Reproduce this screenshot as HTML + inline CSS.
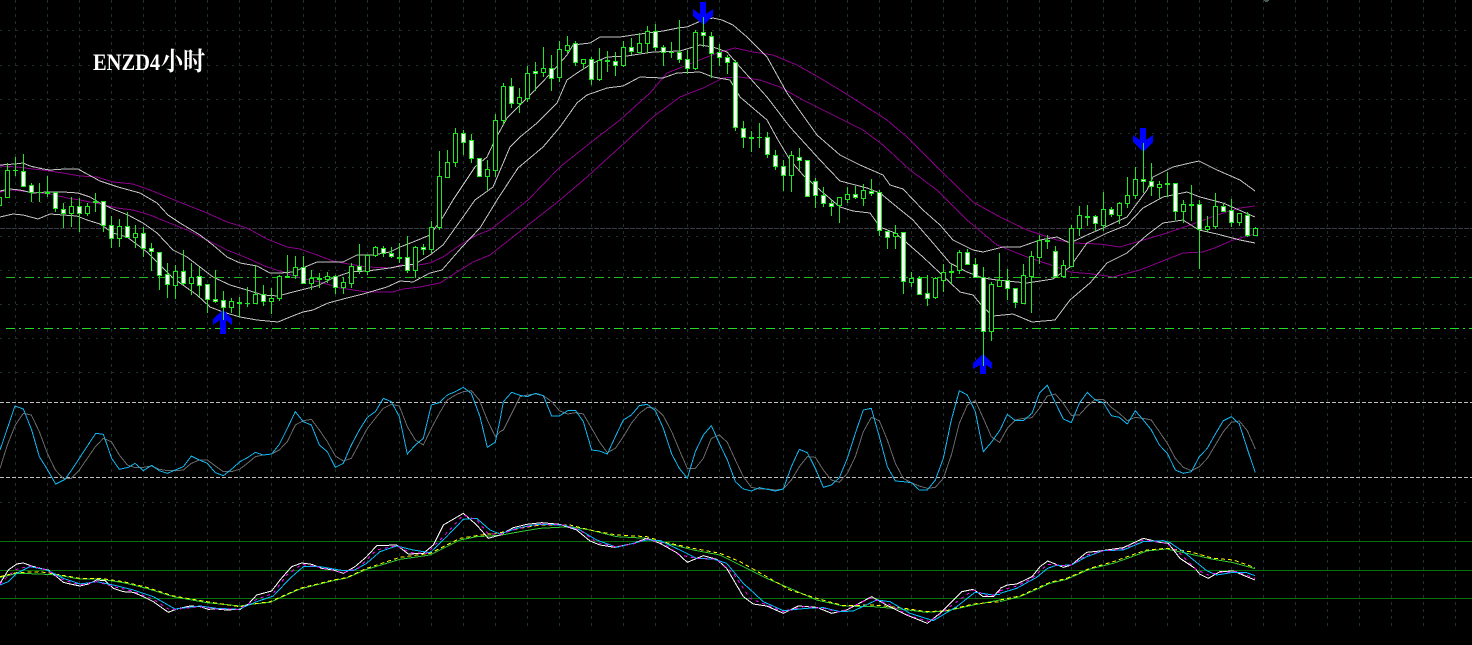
<!DOCTYPE html>
<html lang="zh">
<head>
<meta charset="utf-8">
<title>ENZD4小时</title>
<style>
html,body{margin:0;padding:0;background:#000;width:1472px;height:645px;overflow:hidden}
svg{display:block}
polyline,path{fill:none}
polyline{vector-effect:non-scaling-stroke;stroke-linejoin:miter}
svg *{shape-rendering:crispEdges}
text{shape-rendering:auto}
</style>
</head>
<body>
<svg width="1472" height="645" viewBox="0 0 1472 645" xmlns="http://www.w3.org/2000/svg">
<rect width="1472" height="645" fill="#000"/>

<!-- grid -->
<g stroke="#1d322d" stroke-width="1" stroke-dasharray="3 4">
<path d="M15.5 0V630M47.5 0V630M79.5 0V630M111.5 0V630M143.5 0V630M175.5 0V630M207.5 0V630M239.5 0V630M271.5 0V630M303.5 0V630M335.5 0V630M367.5 0V630M399.5 0V630M431.5 0V630M463.5 0V630M495.5 0V630M527.5 0V630M559.5 0V630M591.5 0V630M623.5 0V630M655.5 0V630M687.5 0V630M719.5 0V630M751.5 0V630M783.5 0V630M815.5 0V630M847.5 0V630M879.5 0V630M911.5 0V630M943.5 0V630M975.5 0V630M1007.5 0V630M1039.5 0V630M1071.5 0V630M1103.5 0V630M1135.5 0V630M1167.5 0V630M1199.5 0V630M1231.5 0V630M1263.5 0V630M1295.5 0V630M1327.5 0V630M1359.5 0V630M1391.5 0V630M1423.5 0V630M1455.5 0V630"/>
</g>
<g stroke="#1d302c" stroke-width="1" stroke-dasharray="2 6">
<path d="M0 30.5H1472M0 65.5H1472M0 99.5H1472M0 133.5H1472M0 167.5H1472M0 202.5H1472M0 236.5H1472M0 270.5H1472M0 304.5H1472M0 338.5H1472M0 372.5H1472M0 502.5H1472"/>
</g>

<!-- price levels -->
<path d="M0 228.5H1472" stroke="#3a3a44" stroke-dasharray="5 1"/>
<path d="M6 277.5H1472" stroke="#20b820" stroke-dasharray="9 4 2 4"/>
<path d="M6 328.5H1472" stroke="#22dd22" stroke-dasharray="9 4 2 4"/>

<!-- bands -->
<g stroke="#8b008b" stroke-width="1">
<polyline points="0,166 17,167 33,169 50,171 63,173 80,176 97,177 113,182 133,184 150,190 167,197 187,205 207,213 227,222 247,228 267,239 287,247 300,249 317,255 333,261 343,263 367,267 393,268 400,265 413,266 430,263 443,257 460,245 477,235 490,230 528,200 560,167 590,143 620,120 650,93 667,73 687,65 707,57 720,52 735,48 753,52 773,55 797,65 820,78 840,90 887,120 907,137 940,170 973,202 1000,217 1027,230 1057,240 1073,243 1100,244 1120,247 1140,241 1167,233 1190,225 1217,215 1240,208 1255,206"/>
<polyline points="0,192 13,190 30,192 50,194 67,198 80,200 100,204 117,208 133,210 150,215 167,222 187,230 207,240 227,250 247,258 267,267 283,272 300,278 320,282 340,288 367,292 393,292 403,289 420,287 440,283 457,272 473,262 490,255 560,200 587,177 620,147 653,117 680,97 703,88 723,78 740,77 760,80 780,87 803,100 843,120 863,130 883,145 910,170 937,190 967,220 997,245 1027,257 1057,267 1070,272 1093,274 1113,277 1140,270 1160,262 1183,253 1203,252 1217,247 1233,240 1255,234"/>
</g>
<g stroke="#c4c4c4" stroke-width="1">
<polyline points="0,165 15,164 23,163 30,166 43,169 50,170 65,169 78,169 87,174 100,181 118,187 140,193 157,203 168,215 180,223 200,235 213,245 227,257 240,263 257,266 270,273 280,273 293,272 317,262 333,262 343,262 357,255 373,255 390,252 400,247 413,242 430,235 443,217 453,200 463,185 475,167 487,157 495,140 507,118 530,95 552,72 567,55 573,45 590,43 600,37 620,37 640,34 663,31 678,28 687,27 703,20 713,18 722,20 733,25 747,37 767,57 787,93 817,135 840,155 860,165 883,175 890,185 903,189 923,210 940,225 953,240 973,250 983,252 1003,247 1020,247 1040,240 1057,237 1070,243 1087,235 1103,228 1127,217 1147,190 1153,177 1173,167 1190,163 1199,161 1217,170 1240,180 1255,191"/>
<polyline points="0,191 10,189 20,190 33,193 47,192 63,192 78,193 90,197 100,203 113,209 128,215 143,223 157,233 173,250 187,257 200,267 213,277 230,285 247,290 263,295 278,296 293,292 317,286 333,278 350,272 367,271 390,268 400,266 415,264 430,255 443,245 463,217 475,200 493,187 510,147 520,137 537,123 557,103 567,80 577,73 593,63 607,57 627,56 653,52 680,51 700,45 713,47 727,52 740,67 767,97 790,127 820,160 840,181 867,188 880,193 897,207 913,220 933,243 950,263 967,272 983,278 997,280 1027,283 1053,279 1070,267 1087,243 1107,233 1127,225 1143,208 1163,197 1187,192 1200,197 1223,203 1255,217"/>
<polyline points="0,217 13,214 23,215 38,219 50,214 63,215 77,216 87,220 100,224 113,233 127,237 147,252 157,262 173,278 197,295 210,307 223,312 240,317 257,320 278,322 290,317 303,312 313,310 328,303 347,298 363,294 387,287 400,281 413,282 430,273 442,270 462,247 480,228 497,200 518,168 543,147 560,127 577,103 587,95 607,88 623,86 640,77 663,78 677,73 700,72 713,77 730,80 740,97 767,120 778,140 790,160 803,175 820,190 840,207 853,211 870,213 880,227 895,233 907,243 923,257 940,273 960,292 973,295 983,307 993,316 1013,314 1032,322 1055,320 1070,300 1090,283 1107,263 1127,253 1147,235 1163,223 1183,220 1199,230 1217,234 1240,240 1255,243"/>
</g>

<!-- arrows -->
<g fill="#0000ff" stroke="none">
<path style="fill:#0000ff" d="M223 310L232 319V325L226 320V334H220V320L213 325V319Z"/>
<path style="fill:#0000ff" d="M983 354L992 363V369L986 365V374H980V365L973 369V363Z"/>
<path style="fill:#0000ff" d="M700 2H706V14L713 9V16L703.500 25L693 16V9L700 14Z"/>
<path style="fill:#0000ff" d="M1140 128H1146V140L1153 135V142L1143.500 152L1133 142V135L1140 140Z"/>
</g>

<!-- wicks -->
<path stroke="#1ee81e" stroke-width="1" d="M-.5 190V210M7.500 163V198M15.500 157V176M23.500 154V186M31.500 183V202M39.500 183V202M47.500 176V197M55.500 192V212M63.500 203V228M71.500 197V227M79.500 198V232M87.500 203V216M95.500 193V212M103.500 201V232M111.500 216V248M119.500 219V247M127.500 212V238M135.500 225V248M143.500 227V257M151.500 243V271M159.500 252V290M167.500 263V298M175.500 265V299M183.500 250V285M191.500 263V295M199.500 267V297M207.500 284V313M215.500 270V303M223.500 291V320M231.500 298V313M239.500 297V317M247.500 287V307M255.500 265V303M263.500 285V306M271.500 288V314M279.500 275V301M287.500 255V277M295.500 256V279M303.500 256V284M311.500 270V290M319.500 273V288M327.500 272V283M335.500 275V294M343.500 277V294M351.500 263V288M359.500 244V274M367.500 255V275M375.500 246V257M383.500 246V257M391.500 247V258M399.500 243V263M407.500 236V273M415.500 246V278M423.500 244V255M431.500 221V253M439.500 151V230M447.500 150V178M455.500 128V167M463.500 130V155M471.500 134V163M479.500 158V177M487.500 160V190M495.500 114V177M503.500 83V125M511.500 78V108M519.500 88V113M527.500 66V102M535.500 62V91M543.500 47V77M551.500 55V91M559.500 41V82M567.500 36V53M575.500 41V66M583.500 59V69M591.500 57V85M599.500 48V81M607.500 51V72M615.500 52V76M623.500 41V67M631.500 38V55M639.500 33V53M647.500 26V53M655.500 24V51M663.500 45V66M671.500 42V58M679.500 20V63M687.500 50V74M695.500 30V70M703.500 17V47M711.500 32V78M719.500 44V66M727.500 55V74M735.500 60V131M743.500 121V148M751.500 131V152M759.500 123V148M767.500 132V158M775.500 150V170M783.500 160V191M791.500 151V192M799.500 148V170M807.500 160V197M815.500 178V208M823.500 187V207M831.500 199V216M839.500 197V223M847.500 187V203M855.500 186V199M863.500 184V206M871.500 179V196M879.500 190V236M887.500 231V249M895.500 225V249M903.500 232V294M911.500 272V287M919.500 276V295M927.500 275V306M935.500 277V299M943.500 264V292M951.500 264V284M959.500 250V274M967.500 249V265M975.500 258V277M983.500 267V366M991.500 282V341M999.500 253V287M1007.500 269V300M1015.500 288V308M1023.500 264V303M1031.500 251V313M1039.500 235V264M1047.500 235V249M1055.500 246V276M1063.500 260V278M1071.500 225V267M1079.500 206V236M1087.500 205V226M1095.500 215V231M1103.500 192V231M1111.500 207V217M1119.500 202V224M1127.500 177V208M1135.500 167V199M1143.500 143V193M1151.500 163V196M1159.500 181V198M1167.500 172V197M1175.500 183V220M1183.500 200V223M1191.500 185V221M1199.500 200V269M1207.500 216V232M1215.500 193V229M1223.500 204V212M1231.500 199V227M1239.500 213V226M1247.500 212V237M1255.500 227V236"/>

<!-- doji -->
<path stroke="#1ee81e" stroke-width="1" d="M13 170.500h5M37 192.500h5M45 192.500h5M45 193.500h5M93 201.500h5M93 202.500h5M237 302.500h5M237 303.500h5M245 303.500h5M285 276.500h5M285 277.500h5M317 278.500h5M317 279.500h5M397 257.500h5M397 258.500h5M605 60.500h5M605 61.500h5M669 52.500h5M749 137.500h5M749 138.500h5M757 137.500h5M949 271.500h5M949 272.500h5M1045 240.500h5M1045 241.500h5M1085 216.500h5M1085 217.500h5M1165 183.500h5M1165 184.500h5M1189 204.500h5M1189 205.500h5"/>

<!-- hollow bodies -->
<path stroke="#1ee81e" stroke-width="1" style="fill:#000" d="M-2.500 197.500h4v8h-4zM5.500 170.500h4v27h-4zM69.500 206.500h4v7h-4zM85.500 206.500h4v7h-4zM117.500 226.500h4v12h-4zM133.500 233.500h4v4h-4zM173.500 271.500h4v14h-4zM189.500 277.500h4v6h-4zM229.500 301.500h4v6h-4zM253.500 294.500h4v9h-4zM269.500 298.500h4v3h-4zM277.500 276.500h4v22h-4zM293.500 267.500h4v8h-4zM309.500 278.500h4v5h-4zM325.500 276.500h4v3h-4zM341.500 282.500h4v5h-4zM349.500 266.500h4v17h-4zM365.500 255.500h4v16h-4zM373.500 247.500h4v8h-4zM413.500 247.500h4v23h-4zM429.500 227.500h4v22h-4zM437.500 176.500h4v51h-4zM445.500 162.500h4v15h-4zM453.500 133.500h4v29h-4zM485.500 169.500h4v7h-4zM493.500 120.500h4v50h-4zM501.500 86.500h4v34h-4zM517.500 97.500h4v6h-4zM525.500 73.500h4v25h-4zM541.500 68.500h4v4h-4zM557.500 49.500h4v28h-4zM565.500 45.500h4v5h-4zM581.500 59.500h4v4h-4zM597.500 60.500h4v19h-4zM621.500 47.500h4v18h-4zM637.500 43.500h4v9h-4zM645.500 31.500h4v12h-4zM693.500 32.500h4v36h-4zM789.500 155.500h4v20h-4zM837.500 197.500h4v8h-4zM845.500 194.500h4v5h-4zM861.500 190.500h4v8h-4zM893.500 233.500h4v3h-4zM909.500 278.500h4v4h-4zM933.500 278.500h4v19h-4zM941.500 272.500h4v8h-4zM957.500 252.500h4v18h-4zM989.500 284.500h4v47h-4zM997.500 280.500h4v6h-4zM1021.500 275.500h4v28h-4zM1029.500 256.500h4v20h-4zM1037.500 240.500h4v17h-4zM1061.500 265.500h4v11h-4zM1069.500 228.500h4v38h-4zM1077.500 215.500h4v13h-4zM1101.500 209.500h4v16h-4zM1117.500 203.500h4v12h-4zM1125.500 195.500h4v8h-4zM1133.500 179.500h4v16h-4zM1157.500 184.500h4v3h-4zM1181.500 204.500h4v7h-4zM1205.500 226.500h4v3h-4zM1213.500 206.500h4v20h-4zM1237.500 213.500h4v9h-4zM1253.500 228.500h4v7h-4z"/>

<!-- filled bodies -->
<path stroke="#1ee81e" stroke-width="1" style="fill:#fff" d="M21.500 171.500h4v15h-4zM29.500 185.500h4v7h-4zM53.500 192.500h4v16h-4zM61.500 209.500h4v4h-4zM77.500 206.500h4v7h-4zM101.500 201.500h4v24h-4zM109.500 225.500h4v13h-4zM125.500 226.500h4v11h-4zM141.500 233.500h4v15h-4zM149.500 248.500h4v3h-4zM157.500 252.500h4v23h-4zM165.500 274.500h4v10h-4zM181.500 271.500h4v12h-4zM197.500 276.500h4v9h-4zM205.500 284.500h4v15h-4zM213.500 299.500h4v2h-4zM221.500 300.500h4v7h-4zM261.500 294.500h4v7h-4zM301.500 267.500h4v16h-4zM333.500 276.500h4v11h-4zM357.500 266.500h4v4h-4zM381.500 248.500h4v5h-4zM389.500 253.500h4v3h-4zM405.500 257.500h4v13h-4zM421.500 247.500h4v2h-4zM461.500 133.500h4v9h-4zM469.500 140.500h4v18h-4zM477.500 158.500h4v18h-4zM509.500 86.500h4v17h-4zM533.500 71.500h4v2h-4zM549.500 68.500h4v10h-4zM573.500 43.500h4v19h-4zM589.500 59.500h4v20h-4zM613.500 61.500h4v4h-4zM629.500 47.500h4v4h-4zM653.500 31.500h4v16h-4zM661.500 47.500h4v5h-4zM677.500 52.500h4v7h-4zM685.500 59.500h4v9h-4zM701.500 32.500h4v3h-4zM709.500 36.500h4v17h-4zM717.500 52.500h4v5h-4zM725.500 57.500h4v5h-4zM733.500 62.500h4v65h-4zM741.500 128.500h4v9h-4zM765.500 137.500h4v17h-4zM773.500 155.500h4v11h-4zM781.500 166.500h4v9h-4zM797.500 157.500h4v3h-4zM805.500 160.500h4v36h-4zM813.500 181.500h4v14h-4zM821.500 195.500h4v8h-4zM829.500 203.500h4v3h-4zM853.500 194.500h4v3h-4zM869.500 191.500h4v2h-4zM877.500 192.500h4v38h-4zM885.500 231.500h4v6h-4zM901.500 232.500h4v49h-4zM917.500 278.500h4v16h-4zM925.500 293.500h4v5h-4zM965.500 252.500h4v12h-4zM973.500 264.500h4v13h-4zM981.500 277.500h4v54h-4zM1005.500 280.500h4v8h-4zM1013.500 288.500h4v14h-4zM1053.500 251.500h4v25h-4zM1093.500 216.500h4v7h-4zM1109.500 209.500h4v5h-4zM1141.500 179.500h4v2h-4zM1149.500 181.500h4v5h-4zM1173.500 183.500h4v28h-4zM1197.500 204.500h4v25h-4zM1221.500 206.500h4v5h-4zM1229.500 210.500h4v12h-4zM1245.500 215.500h4v20h-4z"/>

<!-- small mark top right -->
<path stroke="#4a5a55" d="M1264 .5h5M1265 1.500h3"/>

<!-- pane 2 / pane 3 levels -->
<path d="M0 402.500H1472M0 477.500H1472" stroke="#c0c0c0" stroke-dasharray="4 2"/>
<path d="M0 541.500H1472M0 570.500H1472M0 598.500H1472" stroke="#0a700a"/>

<!-- stochastic -->
<g stroke-width="1">
<g transform="translate(0 380) scale(.33333)">
<polyline stroke="#696969" points="0,265 22,195 46,135 70,100 94,105 118,155 142,220 166,270 190,295 214,295 238,270 262,235 286,200 310,175 334,185 358,225 382,255 406,263 430,262 454,258 478,268 502,272 526,272 550,270 574,250 598,240 622,240 646,258 670,275 694,275 718,268 742,250 766,230 790,225 814,222 838,210 862,185 886,135 910,122 934,118 958,150 982,185 1006,228 1030,243 1054,235 1078,190 1102,145 1126,115 1150,85 1174,73 1198,78 1222,140 1246,180 1270,195 1294,145 1318,100 1342,60 1366,45 1390,35 1414,32 1438,60 1462,120 1486,170 1500,155"/>
<polyline stroke="#12b5ee" points="0,210 45,78 70,87 95,150 118,230 140,265 167,312 195,298 215,270 287,160 310,163 335,235 358,268 385,262 405,250 430,272 455,256 478,272 502,280 526,270 550,260 574,228 598,240 622,250 646,278 670,287 694,268 720,245 742,233 766,217 790,225 815,222 838,193 862,145 886,95 910,125 934,135 958,195 982,215 1006,262 1030,250 1054,195 1078,150 1102,112 1126,95 1150,55 1174,65 1198,110 1222,222 1246,195 1270,175 1294,75 1318,68 1342,45 1366,35 1390,22 1414,40 1440,110 1462,202 1486,186 1500,120"/>
</g>
<g transform="translate(500 380) scale(.33333)">
<polyline stroke="#696969" points="0,155 10,150 35,100 60,50 82,45 107,42 130,47 155,65 178,92 203,102 227,98 250,102 275,145 298,185 322,218 346,205 370,170 394,130 418,100 442,82 466,85 490,107 515,155 538,210 562,265 586,265 610,235 634,175 658,165 682,187 706,240 730,290 754,322 778,327 802,327 826,330 850,327 874,300 898,260 922,230 946,232 970,270 994,300 1018,307 1042,280 1066,230 1090,155 1114,112 1138,122 1162,180 1186,250 1210,295 1234,308 1258,318 1282,325 1306,322 1330,295 1354,225 1378,130 1402,75 1426,62 1450,115 1474,170 1500,188"/>
<polyline stroke="#12b5ee" points="0,120 10,65 35,37 60,46 82,50 107,40 130,47 155,108 178,108 203,92 227,92 250,125 275,210 298,213 322,222 346,170 370,120 394,105 418,77 442,73 466,92 490,145 515,222 538,265 562,295 586,215 610,165 634,137 658,190 682,240 706,305 730,327 754,333 778,323 802,328 826,333 850,327 874,260 898,208 922,218 946,265 970,322 994,315 1018,293 1042,235 1066,160 1090,90 1114,85 1138,170 1162,260 1186,303 1210,305 1234,308 1258,330 1282,330 1306,300 1330,235 1354,120 1378,32 1402,45 1426,95 1450,215 1474,187 1500,150"/>
</g>
<g transform="translate(1000 380) scale(.33333)">
<polyline stroke="#696969" points="0,185 22,145 46,120 70,115 96,113 118,85 142,48 166,42 190,70 214,106 238,105 262,78 286,58 310,58 334,82 358,100 382,122 406,112 430,115 454,120 478,155 502,190 526,235 550,262 574,272 598,260 622,235 646,195 670,155 694,127 718,123 742,152 766,207"/>
<polyline stroke="#12b5ee" points="0,150 22,103 46,122 70,122 96,100 118,40 142,16 166,68 190,117 214,128 238,70 262,37 286,60 310,68 334,107 358,112 382,132 406,92 430,120 454,150 478,195 502,220 526,270 550,280 574,275 598,230 622,205 646,162 670,122 694,110 718,132 742,207 766,278"/>
</g>
</g>

<!-- lower pane -->
<g stroke-width="1">
<g transform="translate(0 380) scale(.33333)">
<polyline stroke="#32cd32" points="0,593 50,580 120,582 170,585 240,597 300,597 370,608 440,625 520,650 620,668 720,678 760,672 810,667 900,627 1000,602 1040,594 1100,568 1200,538 1290,525 1380,480 1430,470 1500,466"/>
<polyline stroke="#ffff00" stroke-dasharray="4 3" points="0,590 50,578 120,575 170,583 240,595 300,595 370,605 440,622 520,648 620,665 720,680 760,672 810,665 900,625 1000,600 1040,593 1100,565 1200,532 1290,520 1380,475 1430,467 1500,458"/>
<polyline stroke="#ffffff" points="0,610 25,570 50,552 70,549 95,558 120,565 145,570 170,590 190,607 215,613 240,618 265,612 290,600 315,602 340,625 370,635 400,637 430,650 460,665 505,697 530,687 570,678 600,680 625,688 650,687 680,690 720,688 745,672 770,645 815,633 840,600 875,560 905,549 935,553 965,565 1000,570 1030,580 1065,560 1100,530 1130,497 1190,495 1225,522 1270,520 1300,495 1330,435 1390,400 1430,435 1465,475 1500,465"/>
<polyline stroke="#00bfff" points="0,615 25,605 50,580 90,560 140,570 190,595 240,612 290,605 340,615 400,630 460,650 525,687 600,678 650,685 715,688 770,665 820,648 870,595 910,560 960,560 1030,572 1060,572 1100,550 1140,515 1190,498 1240,510 1290,518 1340,470 1390,418 1430,415 1470,450 1500,462"/>
<polyline stroke="#ff00ff" stroke-dasharray="3 4" points="0,612 25,588 50,568 90,558 140,570 190,600 240,615 290,605 340,620 400,634 460,658 510,690 600,680 650,687 715,688 770,658 820,640 860,585 905,553 960,562 1030,578 1075,565 1130,510 1190,497 1230,518 1280,520 1330,470 1390,405 1430,420 1465,462 1500,463"/>
</g>
<g transform="translate(500 380) scale(.33333)">
<polyline stroke="#32cd32" points="0,466 60,455 120,445 210,440 270,450 350,470 440,475 500,490 580,510 660,525 720,555 800,595 870,625 950,660 1030,678 1120,680 1200,687 1280,697 1340,693 1420,675 1500,660"/>
<polyline stroke="#ffff00" stroke-dasharray="4 3" points="0,458 60,445 120,435 210,435 270,450 350,465 440,470 500,488 580,505 660,520 720,545 800,590 870,630 950,655 1030,677 1120,675 1200,683 1280,695 1340,692 1420,672 1500,665"/>
<polyline stroke="#ffffff" points="0,465 40,443 80,433 125,428 180,433 230,450 270,483 300,495 345,502 400,490 440,475 480,490 530,518 562,547 610,527 650,538 680,565 730,650 760,672 800,678 850,700 895,678 950,682 995,700 1040,690 1115,650 1165,678 1220,705 1282,730 1320,700 1385,635 1420,628 1450,650 1480,650 1500,628"/>
<polyline stroke="#00bfff" points="0,462 50,445 110,433 190,435 240,450 290,480 350,502 400,490 440,480 480,482 540,510 590,535 640,537 680,550 730,610 790,665 850,692 920,685 970,683 1020,695 1060,693 1130,660 1170,665 1230,700 1300,722 1370,680 1425,637 1480,645 1500,643"/>
<polyline stroke="#ff00ff" stroke-dasharray="3 4" points="0,463 50,447 120,432 190,435 240,450 290,487 345,500 400,492 440,477 490,490 540,525 590,535 650,538 700,580 750,655 800,675 850,695 910,680 970,685 1020,697 1110,655 1165,672 1230,708 1290,725 1350,680 1420,630 1470,650 1500,635"/>
</g>
<g transform="translate(1000 380) scale(.33333)">
<polyline stroke="#32cd32" points="0,665 60,650 110,628 150,610 200,598 270,567 340,550 410,525 440,513 500,507 570,522 640,538 700,548 765,566"/>
<polyline stroke="#ffff00" stroke-dasharray="4 3" points="0,660 60,648 110,625 150,607 200,595 270,565 340,545 410,520 440,510 500,505 570,515 640,535 700,540 765,563"/>
<polyline stroke="#ffffff" points="0,625 22,615 50,612 96,590 120,560 143,543 166,552 190,562 214,555 260,517 300,513 370,503 430,475 480,487 505,490 540,535 585,565 600,583 625,595 660,575 700,573 740,590 765,600"/>
<polyline stroke="#00bfff" points="0,640 50,625 110,592 143,565 166,557 214,555 260,530 310,512 370,510 430,485 490,482 510,488 550,515 620,572 650,585 700,577 740,578 765,587"/>
<polyline stroke="#ff00ff" stroke-dasharray="3 4" points="0,632 50,618 96,595 143,553 190,557 214,555 260,525 310,513 370,507 430,480 500,490 540,520 590,570 625,585 660,577 710,575 765,595"/>
</g>
</g>

<!-- label -->
<text transform="translate(93 70) scale(1 1.15)" x="0" y="0" fill="#fff" style="font-family:'Liberation Serif','Noto Serif CJK SC',serif;font-weight:bold;font-size:20.500px">ENZD4<tspan dx="1" style="font-size:22px;font-family:'Noto Serif CJK SC','Liberation Serif',serif">小时</tspan></text>
</svg>
</body>
</html>
